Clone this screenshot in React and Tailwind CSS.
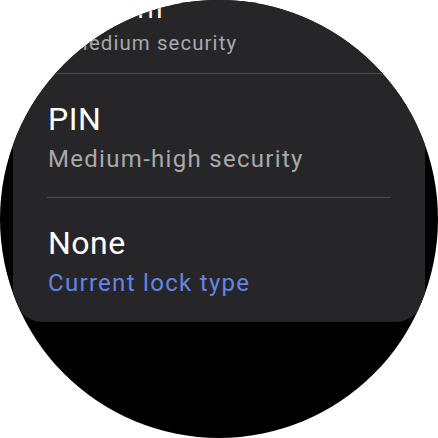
export default function App() {
  const font = { fontFamily: "Roboto, 'Noto Sans', sans-serif" };
  return (
    <div className="w-[438px] h-[438px] bg-white" style={font}>
      <div className="w-[438px] h-[438px] rounded-full bg-black overflow-hidden">
        <div className="mx-[13px] bg-[#262628] rounded-b-[30px] flex flex-col">
          {/* Row 1 (scaled down near edge) */}
          <div className="pl-[57px] pb-[18px] flex flex-col">
            <div className="-mt-[7px] text-[27px] leading-[32px] tracking-[0.8px] text-white">Pattern</div>
            <div className="mt-[6px] text-[20.4px] leading-[24px] tracking-[1.1px] text-[#a9a9ab]">Medium security</div>
          </div>
          <div className="mx-[34px] h-px bg-[#4b4b4f]" />
          {/* Row 2 */}
          <div className="pl-[35px] pt-[26px] pb-[24px] flex flex-col">
            <div className="text-[32px] leading-[38px] tracking-[0.5px] text-white">PIN</div>
            <div className="mt-[7px] text-[24px] leading-[28px] tracking-[1.3px] text-[#a9a9ab]">Medium-high security</div>
          </div>
          <div className="mx-[34px] h-px bg-[#4b4b4f]" />
          {/* Row 3 */}
          <div className="pl-[35px] pt-[26px] pb-[25px] flex flex-col">
            <div className="text-[32px] leading-[38px] tracking-[0.5px] text-white">None</div>
            <div className="mt-[7px] text-[24px] leading-[28px] tracking-[1.3px] text-[#6584e8]">Current lock type</div>
          </div>
        </div>
      </div>
    </div>
  );
}
